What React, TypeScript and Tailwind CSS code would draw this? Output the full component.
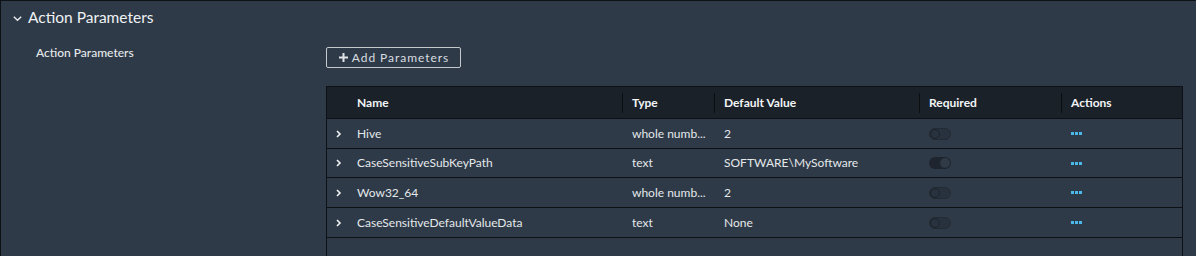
import React from 'react';

// 파라미터 행 데이터
const rows = [
  { name: 'Hive', type: 'whole numb...', value: '2', required: false },
  { name: 'CaseSensitiveSubKeyPath', type: 'text', value: 'SOFTWARE\\MySoftware', required: true },
  { name: 'Wow32_64', type: 'whole numb...', value: '2', required: false },
  { name: 'CaseSensitiveDefaultValueData', type: 'text', value: 'None', required: false },
];

function Toggle({ on }: { on: boolean }) {
  return on ? (
    <span className="flex h-[12px] w-[22px] items-center justify-end rounded-full bg-[#1e252e] pr-[1px]">
      <span className="h-[10px] w-[10px] rounded-full bg-[#2f3a46]" />
    </span>
  ) : (
    <span className="flex h-[12px] w-[22px] items-center rounded-full border border-[#222a33] bg-[#28323e]">
      <span className="h-[10px] w-[10px] rounded-full border border-[#1c232b]" />
    </span>
  );
}

function Dots() {
  return (
    <span className="flex gap-[1px]">
      <span className="h-[3px] w-[3px] bg-[#4bb8ea]" />
      <span className="h-[3px] w-[3px] bg-[#4bb8ea]" />
      <span className="h-[3px] w-[3px] bg-[#4bb8ea]" />
    </span>
  );
}

export default function App() {
  return (
    <div
      className="h-[256px] w-[1196px] overflow-hidden border-t border-l border-[#0e1115] bg-[#2e3a47] text-white"
      style={{ fontFamily: 'Lato, "Noto Sans", sans-serif' }}
    >
      {/* 섹션 헤더 */}
      <div className="flex h-[34px] items-center pl-[11px]">
        <svg width="11" height="11" viewBox="0 0 12 12" className="mr-[5px]">
          <path d="M2 4 L6 8 L10 4" fill="none" stroke="#e8ecef" strokeWidth="1.5" />
        </svg>
        <span className="text-[15.5px] text-[#eef1f4]">Action Parameters</span>
      </div>

      <div className="flex">
        <div className="w-[325px] pt-[9px] pl-[35px] text-[12px] font-medium text-[#e6e9ec]">Action Parameters</div>

        <div className="flex-1 pt-[12px]">
          <button className="flex h-[21px] w-[135px] items-center justify-center gap-[3px] rounded-[2px] border border-[#c4c9ce] text-[12px] tracking-[0.08em] text-[#d9dde1]">
            <svg width="11" height="11" viewBox="0 0 11 11">
              <path d="M5.5 1 V10 M1 5.5 H10" stroke="#e0e4e8" strokeWidth="2" />
            </svg>
            Add Parameters
          </button>

          <div className="mt-[18px] w-[857px] border-t border-r border-l border-[#0d1014] text-[12px]">
            <div className="flex h-[32px] items-center border-b border-[#0d1014] bg-[#1b2129] font-bold text-[#f2f4f6]">
              <div className="w-[295px] pl-[30px]">Name</div>
              <div className="flex w-[92px] items-center">
                <span className="mr-[9px] h-[20px] w-[1px] bg-[#0c0f12]" />Type
              </div>
              <div className="flex w-[205px] items-center">
                <span className="mr-[9px] h-[20px] w-[1px] bg-[#0c0f12]" />Default Value
              </div>
              <div className="flex w-[142px] items-center">
                <span className="mr-[9px] h-[20px] w-[1px] bg-[#0c0f12]" />Required
              </div>
              <div className="flex flex-1 items-center">
                <span className="mr-[9px] h-[20px] w-[1px] bg-[#0c0f12]" />Actions
              </div>
            </div>

            {rows.map((r, i) => (
              <div
                key={r.name}
                className={`flex items-center border-b border-[#0d1014] text-[#e4e8eb] ${i === 1 ? 'h-[29px]' : 'h-[30px]'}`}
              >
                <div className="flex w-[30px] justify-center pr-[6px]">
                  <svg width="8" height="8" viewBox="0 0 8 8">
                    <path d="M2 1 L5 4 L2 7" fill="none" stroke="#f0f2f4" strokeWidth="1.6" />
                  </svg>
                </div>
                <div className="w-[265px]">{r.name}</div>
                <div className="w-[92px] pl-[10px]">{r.type}</div>
                <div className="w-[205px] pl-[10px]">{r.value}</div>
                <div className="w-[142px] pl-[10px]">
                  <Toggle on={r.required} />
                </div>
                <div className="flex-1 pl-[10px]">
                  <Dots />
                </div>
              </div>
            ))}
            <div className="h-[40px]" />
          </div>
        </div>
      </div>
    </div>
  );
}
